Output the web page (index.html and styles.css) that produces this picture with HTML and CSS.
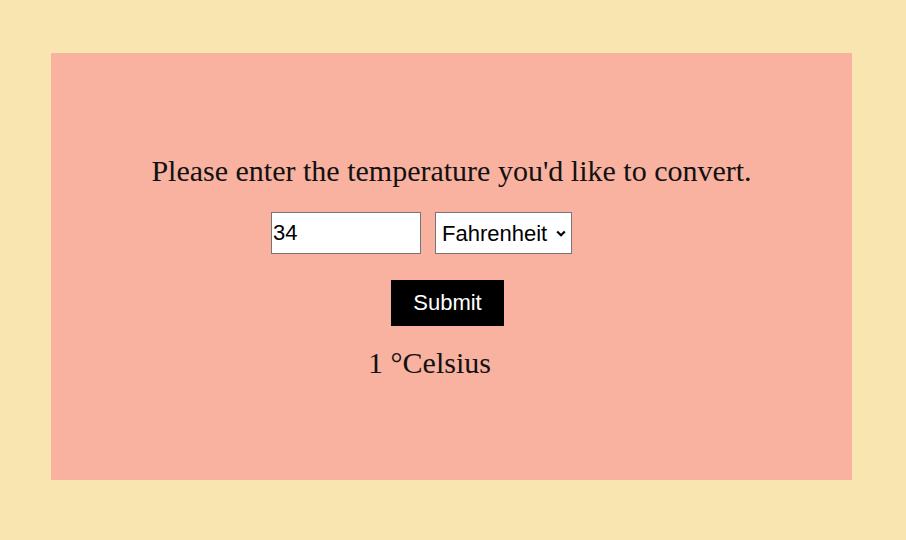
FILE: index.html
```html
<!DOCTYPE html>
<html>
<head>
<meta charset="utf-8">
<link rel="stylesheet" href="styles.css">
</head>
<body>
<div class="panel">
  <p class="prompt">Please enter the temperature you'd like to convert.</p>
  <div class="row">
    <input class="temp" type="text" value="34">
    <select class="unit"><option>Fahrenheit</option><option>Celsius</option></select>
  </div>
  <button class="submit">Submit</button>
  <p class="result">1 °Celsius</p>
</div>
</body>
</html>
```
FILE: styles.css
```css
html, body { margin: 0; padding: 0; }
body {
  background: #f8e5b0;
  padding: 53px 54px 60px 51px;
  font-family: "Liberation Serif", serif;
}
.panel {
  background: #f9b1a0;
  height: 427px;
  box-sizing: border-box;
  padding-top: 101px;
  display: flex;
  flex-direction: column;
  align-items: center;
}
.prompt {
  margin: 0;
  font-size: 30px;
  line-height: 34px;
  color: #111;
}
.row {
  margin-top: 24px;
  margin-right: 60px;
  display: flex;
  gap: 14px;
}
.temp {
  box-sizing: border-box;
  width: 150px;
  height: 42px;
  padding: 0 1px;
  border: 1px solid #767676;
  font-family: "Liberation Sans", Arial, sans-serif;
  font-size: 22px;
  background: #fff;
  color: #000;
}
.unit {
  appearance: none;
  -webkit-appearance: none;
  box-sizing: border-box;
  width: 137px;
  height: 42px;
  padding: 0 0 0 6px;
  border: 1px solid #767676;
  border-radius: 0;
  font-family: "Liberation Sans", Arial, sans-serif;
  font-size: 22px;
  color: #000;
  background: #fff url("data:image/svg+xml;utf8,<svg xmlns='http://www.w3.org/2000/svg' width='10' height='7' viewBox='0 0 10 7'><path d='M1.2 1.5 L5 5.2 L8.8 1.5' fill='none' stroke='black' stroke-width='2.2'/></svg>") no-repeat right 5px center;
}
.submit {
  margin-top: 26px;
  margin-right: 8px;
  box-sizing: border-box;
  width: 113px;
  height: 46px;
  border: none;
  background: #000;
  color: #fff;
  font-family: "Liberation Sans", Arial, sans-serif;
  font-size: 22px;
  padding: 0;
}
.result {
  margin: 20px 44px 0 0;
  font-size: 30px;
  line-height: 34px;
  color: #111;
}
```
